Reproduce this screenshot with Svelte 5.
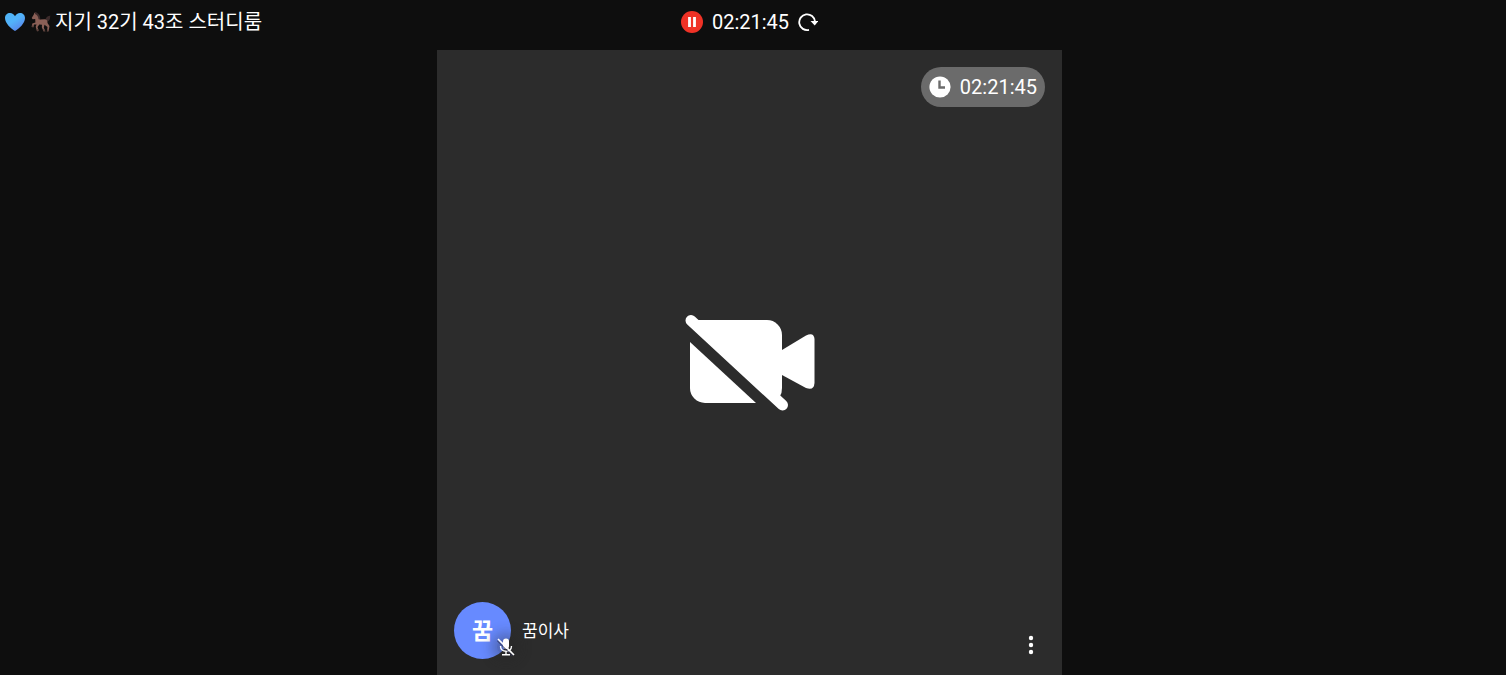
<script lang="ts">
  let roomName = '지기 32기 43조 스터디룸';
  let member = { name: '꿈이사', color: '#678aff' };
  let paused = true;
  let seconds = 2 * 3600 + 21 * 60 + 45;

  const pad = (n: number) => String(n).padStart(2, '0');

  $: time = `${pad(Math.floor(seconds / 3600))}:${pad(Math.floor(seconds / 60) % 60)}:${pad(seconds % 60)}`;

  function togglePause() {
    paused = !paused;
  }

  function resetTimer() {
    seconds = 0;
  }
</script>

<div class="room">
  <header class="topbar">
    <h1 class="title">
      <svg class="heart" viewBox="0 0 20 20" aria-hidden="true">
        <defs>
          <linearGradient id="heart-fill" x1="0" y1="0" x2="0.7" y2="1">
            <stop offset="0" stop-color="#4fb4f4" />
            <stop offset="0.5" stop-color="#52b2fa" />
            <stop offset="1" stop-color="#5a83ea" />
          </linearGradient>
        </defs>
        <path d="M10 19 C6 16.5 0 11.5 0 6 C0 3 2.200 1 5 1 C7.300 1 9 2.400 10 4.200 C11 2.400 12.700 1 15 1 C17.800 1 20 3 20 6 C20 11.500 14 16.500 10 19Z" fill="url(#heart-fill)" />
      </svg>
      <svg class="horse" viewBox="0 0 20 20" aria-hidden="true">
        <path d="M14.500 8 C15 4.500 17 4 19.500 3.500 C18.500 5 20 6.500 18 8.500 C17 9.500 16 9.500 15 9Z" fill="#3c2b2b" />
        <path d="M3.500 .5 L5 2 C7 2 8.500 4 9 7.500 L14 7.300 C16 7.500 16.700 9 16.500 11 L18.500 14 L17.700 19 L16 19.300 L16.500 15 L13.500 12.800 L12.800 15.500 L14 19 L12.500 19.300 L10.800 15.300 L11 12.700 L8.300 12.600 L6.500 15 L7.500 18.500 L6 19 L4.700 14.800 L5.500 12.600 L3 12.500 L2.300 15.200 L.8 14.800 L1.300 11.500 L4.400 10.600 L4.200 7 L1.700 7.200 L.7 6 L2.800 2.500Z" fill="#8a5f56" />
        <path d="M4 0 C7.500 .5 9.500 4 9.300 7.600 L7.500 7.200 C7.500 4.500 6 3 4 2Z" fill="#3c2b2b" />
        <path d="M.8 13.300 L2.600 13.700 L2.300 15.500 L.6 15Z M5.500 17.200 L7.200 16.800 L7.700 19 L6 19.500Z M12 17.500 L13.600 17 L14.500 19.500 H12.600Z M16.200 17.500 L18 17.800 L17.700 19.500 H15.700Z" fill="#5a403b" />
      </svg>
      <span>{roomName}</span>
    </h1>

    <div class="timer">
      <button type="button" class="icon-btn pause" aria-label="Pause" aria-pressed={paused} on:click={togglePause}>
        <svg width="22" height="22" viewBox="0 0 22 22">
          <circle cx="11" cy="11" r="11" fill="#f03226" />
          <path d="M8.500 6 V16 M13.500 6 V16" stroke="#fff" stroke-width="2.800" />
        </svg>
      </button>
      <time>{time}</time>
      <button type="button" class="icon-btn" aria-label="Reset" on:click={resetTimer}>
        <svg width="20" height="20" viewBox="0 0 20 20">
          <path d="M11 17.900 A7.900 7.900 0 1 1 17 9.500" fill="none" stroke="#fff" stroke-width="1.800" />
          <path d="M12.500 9 H20.500 L16.700 13.500Z" fill="#fff" />
        </svg>
      </button>
    </div>
  </header>

  <main class="stage">
    <section class="tile" aria-label={member.name}>
      <div class="tile-top">
        <div class="badge">
          <svg width="22" height="22" viewBox="0 0 22 22" aria-hidden="true">
            <circle cx="11" cy="11" r="10.600" fill="#fff" />
            <path d="M10.500 4.500 V11.500 H16" fill="none" stroke="#6b6b6b" stroke-width="2.400" />
          </svg>
          <time>{time}</time>
        </div>
      </div>

      <svg class="camera" viewBox="0 0 130 96" role="img" aria-label="Camera off">
        <path d="M8 5 H82 A15 15 0 0 1 97 20 V73 Q97 78 95 81 L90 83Z" />
        <path d="M5 27 L71 88 H20 A15 15 0 0 1 5 73Z" />
        <path d="M97 35 L121 20.500 Q129 17 129.500 24 V68 Q129 76 121 73 L97 60Z" />
        <path class="slash" d="M6 5.500 L97.500 90" />
      </svg>

      <div class="tile-bottom">
        <div class="member">
          <div class="avatar" style="background: {member.color}">
            <span class="initial">{member.name.charAt(0)}</span>
            <span class="muted">
              <svg width="18" height="18" viewBox="0 0 18 18" role="img" aria-label="Muted">
                <rect x="6" y="0.500" width="6" height="10.500" rx="3" fill="#fff" />
                <path d="M3.500 8 C3.500 15 14.500 15 14.500 8 M9 13 V16.500 M5 16.700 H13" fill="none" stroke="#fff" stroke-width="1.400" />
                <path d="M0 2.500 L16 18.500" stroke="#35395a" stroke-width="1" />
                <path d="M1 1 L17 17" stroke="#fff" stroke-width="1.600" />
              </svg>
            </span>
          </div>
          <span class="name">{member.name}</span>
        </div>
        <button type="button" class="icon-btn more" aria-label="More">
          <svg width="6" height="20" viewBox="0 0 6 20" fill="#fff">
            <circle cx="3" cy="3" r="2.200" />
            <circle cx="3" cy="10" r="2.200" />
            <circle cx="3" cy="17" r="2.200" />
          </svg>
        </button>
      </div>
    </section>
  </main>
</div>

<style>
:global(body) {
  background: #0e0e0e;
}

.room {
  display: flex;
  flex-direction: column;
  box-sizing: border-box;
  height: 100vh;
  padding-right: 7px;
  color: #fff;
  font-family: Roboto, 'Noto Sans CJK KR', sans-serif;
  font-size: 20px;
}

.topbar {
  display: grid;
  grid-template-columns: 1fr auto 1fr;
  align-items: center;
  height: 44px;
  padding-bottom: 6px;
}
.title {
  display: flex;
  align-items: center;
  margin: 0;
  padding-left: 5px;
  font-size: 20px;
  font-weight: 400;
  line-height: 24px;
  white-space: nowrap;
}
.heart {
  width: 20px;
  height: 20px;
  margin-right: 6px;
}
.horse {
  width: 20px;
  height: 20px;
  margin-right: 4px;
}
.timer {
  display: flex;
  align-items: center;
  gap: 9px;
  line-height: 24px;
}

.icon-btn {
  display: flex;
  padding: 0;
  border: 0;
  background: none;
  cursor: pointer;
}

.stage {
  display: flex;
  flex: 1;
  justify-content: center;
  min-height: 0;
}
.tile {
  display: flex;
  flex-direction: column;
  align-items: center;
  justify-content: space-between;
  box-sizing: border-box;
  height: 100%;
  aspect-ratio: 1;
  padding: 17px 17px 16px;
  background: #2c2c2c;
}
.tile-top {
  display: flex;
  flex: 1;
  align-items: flex-start;
  justify-content: flex-end;
  width: 100%;
}
.badge {
  display: flex;
  align-items: center;
  gap: 9px;
  height: 40px;
  padding: 0 8px;
  border-radius: 20px;
  background: #6b6b6b;
}
.camera {
  width: 130px;
  height: 96px;
  fill: #fff;
}
.slash {
  fill: none;
  stroke: #fff;
  stroke-width: 11;
  stroke-linecap: round;
}

.tile-bottom {
  display: flex;
  flex: 1;
  align-items: flex-end;
  justify-content: space-between;
  width: 100%;
}
.member {
  display: flex;
  align-items: center;
  gap: 11px;
}
.avatar {
  position: relative;
  display: flex;
  align-items: center;
  justify-content: center;
  width: 57px;
  height: 57px;
  border-radius: 50%;
}
.initial {
  padding-bottom: 4px;
  font-size: 23px;
  font-weight: 700;
}
/* mic state sits over the avatar's lower right edge */
.muted {
  position: absolute;
  right: -4px;
  bottom: 3px;
  display: flex;
  border-radius: 50%;
  background: rgba(38, 38, 38, 0.3);
  box-shadow: 0 0 12px 6px rgba(38, 38, 38, 0.3);
}
.name {
  padding-bottom: 3px;
  font-size: 17px;
  font-weight: 400;
}
.more {
  padding: 4px 11px;
}
</style>
